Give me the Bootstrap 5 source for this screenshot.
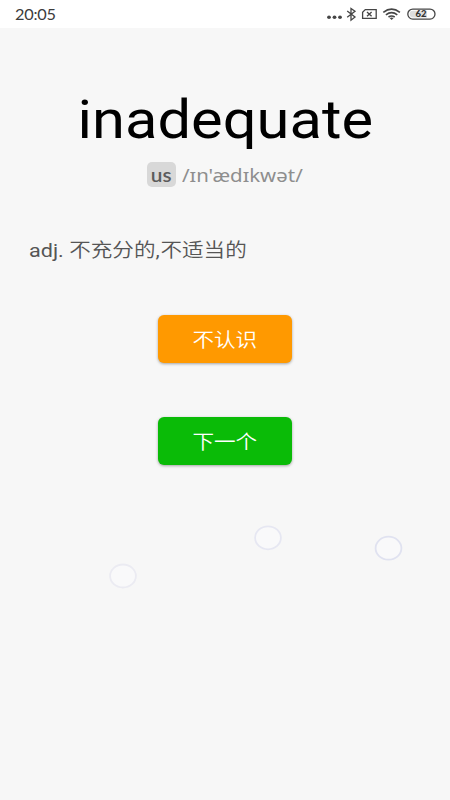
<!DOCTYPE html>
<html lang="zh-CN">
<head>
<meta charset="utf-8">
<meta name="viewport" content="width=device-width, initial-scale=1">
<title>inadequate</title>
<link href="https://cdn.jsdelivr.net/npm/bootstrap@5.3.0/dist/css/bootstrap.min.css" rel="stylesheet">
<style>
body{background:#f7f7f7;font-family:Roboto,"Noto Sans CJK SC",sans-serif;height:800px;overflow:hidden}
.wide{display:inline-block;transform:scaleX(1.125);white-space:nowrap}
.from-left{transform-origin:left center}
.statusbar{height:28px;padding-left:14.5px}
.clock{font:14.5px/29px Lato,sans-serif;letter-spacing:-.2px;color:#3c3c3c}
.word{font-size:53px;line-height:64px;margin-top:60px;color:#000;font-weight:400}
.phonetic{height:26px;margin-top:9px;gap:6px;color:#8e8e8e}
.accent{width:29px;height:25px;border-radius:5px;background:#d8d8d8;color:#5c5c5c;font:600 18.5px/26px Lato,sans-serif}
.ipa{width:121px;height:26px;font:18.2px/28px "Noto Sans",sans-serif}
.meaning{margin:47px 0 0 28.5px;height:30px;line-height:30px;font-size:19.2px;color:#555}
.han{font-family:"Noto Sans CJK SC",sans-serif;font-weight:350}
.comma{letter-spacing:.6px}
.action{width:134px;height:48px;padding:0;border:0;border-radius:6px;font-size:19.2px;line-height:48px;color:#fff;box-shadow:0 1px 3px rgba(0,0,0,.35)}
.unknown{background:#ff9900;margin-top:51px}
.next{background:#0abb07;margin-top:54px}
.bubbles{margin-top:35px}
</style>
<script src="https://cdn.jsdelivr.net/npm/bootstrap@5.3.0/dist/js/bootstrap.bundle.min.js"></script>
</head>
<body>
<header class="statusbar bg-white d-flex justify-content-between">
  <span class="clock wide from-left">20:05</span>
  <svg width="130" height="28" viewBox="320 0 130 28" fill="none" stroke="#454545" stroke-width="1.3" aria-hidden="true">
    <g fill="#454545" stroke="none"><ellipse cx="329" cy="17.3" rx="1.9" ry="1.7"/><ellipse cx="334.5" cy="17.3" rx="1.9" ry="1.7"/><ellipse cx="340" cy="17.3" rx="1.9" ry="1.7"/></g>
    <path d="M347.2 11L355 17l-4 3.2V8.4L355 11.2l-7.8 6"/>
    <path d="M365.3 9.6H376.2V18.4H362.6V12.3Z"/>
    <path d="M367 12l4.6 4.2M371.6 12L367 16.2"/>
    <path stroke-width="1.6" d="M383.3 12.3Q391.6 6 399.9 12.3M385.9 14.8Q391.6 10.5 397.3 14.8M388.5 17Q391.6 14.9 394.7 17"/>
    <path fill="#454545" stroke="none" d="M389.6 18.1Q391.6 16.9 393.6 18.1L391.6 20Z"/>
    <rect x="407.8" y="9.1" width="27.2" height="10" rx="5"/>
    <path fill="#dedede" stroke="none" d="M413 10.7H427V17.5H413A3.4 3.4 0 0 1 413 10.7Z"/>
    <text x="415.6" y="17.3" textLength="11" lengthAdjust="spacingAndGlyphs" fill="#333" stroke="none" font-family="Lato, sans-serif" font-weight="900" font-size="8.5">62</text>
  </svg>
</header>
<main class="d-flex flex-column align-items-center">
  <h1 class="word mb-0"><span class="wide">inadequate</span></h1>
  <div class="phonetic d-flex align-items-center">
    <span class="accent d-flex justify-content-center"><span class="wide">us</span></span>
    <span class="ipa"><span class="wide from-left">/ɪn'ædɪkwət/</span></span>
  </div>
  <div class="meaning align-self-start"><span class="wide from-left">adj. <span class="han">不充分的</span><span class="comma">,</span><span class="han">不适当的</span></span></div>
  <button class="action unknown btn han"><span class="wide">不认识</span></button>
  <button class="action next btn han"><span class="wide">下一个</span></button>
  <svg width="450" height="110" viewBox="0 500 450 110" class="bubbles" fill="#f9f9fa" stroke-width="1.8" aria-hidden="true">
    <ellipse cx="268" cy="537.8" rx="12.9" ry="11.5" stroke="#e6e7f2"/>
    <ellipse cx="388.5" cy="548.2" rx="12.9" ry="11.5" stroke="#e0e2f0"/>
    <ellipse cx="123" cy="576" rx="12.9" ry="11.5" stroke="#ebebf2"/>
  </svg>
</main>
</body>
</html>
